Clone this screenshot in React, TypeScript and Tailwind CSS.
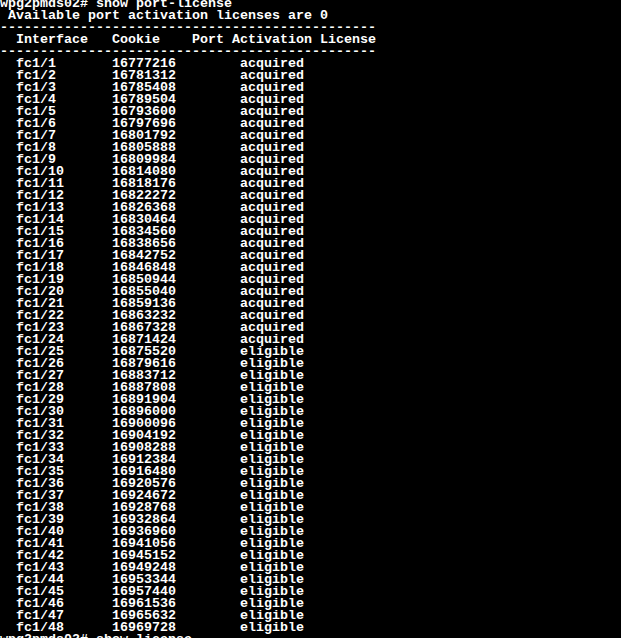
import React from 'react';

const pad = (s: string, n: number) => s + ' '.repeat(Math.max(0, n - s.length));

export default function App() {
  const rows: string[] = [];
  for (let i = 1; i <= 48; i++) {
    const cookie = 16777216 + (i - 1) * 4096;
    const status = i <= 24 ? 'acquired' : 'eligible';
    rows.push(pad(pad('  fc1/' + i, 14) + cookie, 30) + status);
  }

  const dashes = '-'.repeat(47);

  const lines = [
    'wpg2pmds02# show port-license',
    ' Available port activation licenses are 0',
    dashes,
    '  Interface   Cookie    Port Activation License',
    dashes,
    ...rows,
    'wpg2pmds02# show license',
  ];

  return (
    <div className="w-[621px] h-[638px] bg-black overflow-hidden">
      <pre
        className="mt-[-2px] text-white font-bold text-[13.333px] leading-[12px] whitespace-pre"
        style={{ fontFamily: '"Liberation Mono", "DejaVu Sans Mono", monospace' }}
      >
        {lines.join('\n')}
      </pre>
    </div>
  );
}
